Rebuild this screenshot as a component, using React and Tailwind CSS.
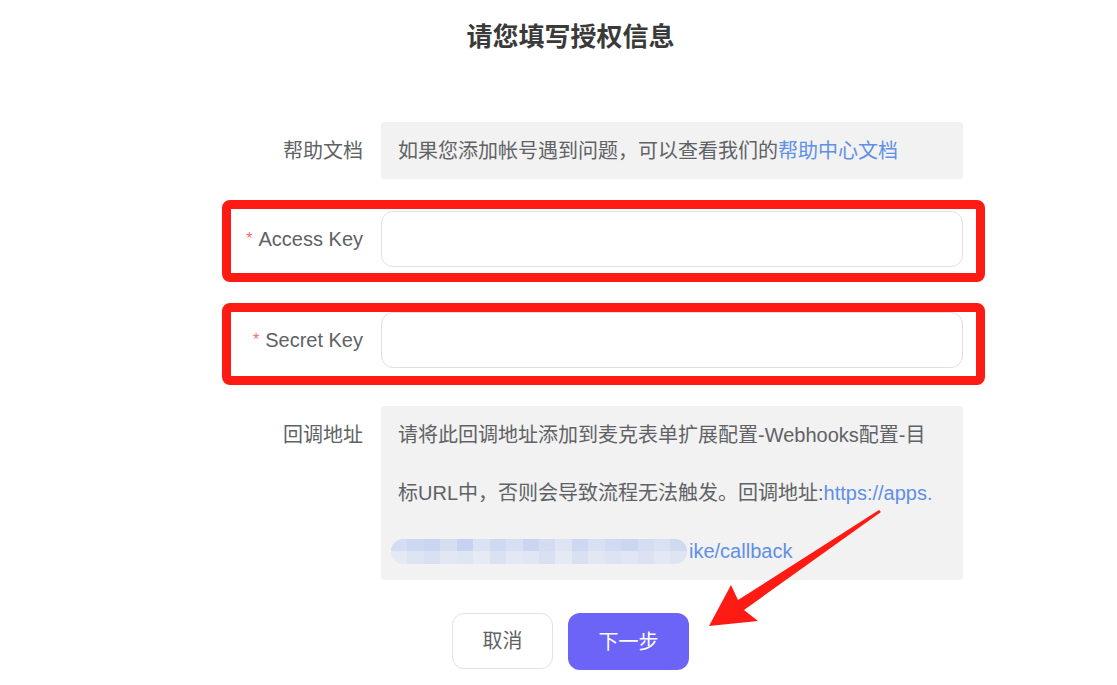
import React from "react";

const FONT = { fontFamily: '"Liberation Sans", "Noto Sans CJK SC", sans-serif' };

const blurCols = [
  ["#d3ddf3", "#e4e9f4"],
  ["#ccd8f2", "#dde4f3"],
  ["#c9d5f1", "#d8e0f2"],
  ["#d6def2", "#e2e7f3"],
  ["#c5d2f0", "#dfe5f3"],
  ["#dbe2f3", "#e6eaf4"],
  ["#cfd9f2", "#dae1f2"],
  ["#d7dff3", "#e3e8f4"],
  ["#cad6f1", "#e0e6f3"],
  ["#d4dcf2", "#d9e0f2"],
  ["#dee4f3", "#e5e9f4"],
  ["#cdd8f2", "#d8e0f2"],
  ["#d8e0f3", "#e2e7f3"],
  ["#d0daf2", "#dce3f3"],
  ["#cbd6f1", "#e1e6f4"],
  ["#d5ddf2", "#dbe2f3"],
  ["#dae1f3", "#e4e8f4"],
  ["#cfd9f2", "#dfe4f3"],
];

function Blur() {
  return (
    <span className="inline-flex -ml-[7px] mr-[2px] h-[25px] w-[296px] overflow-hidden rounded-[12px] align-middle blur-[0.6px]">
      {blurCols.map((c, i) => (
        <span key={i} className="flex h-full flex-1 flex-col">
          <span className="flex-1" style={{ background: c[0] }} />
          <span className="flex-1" style={{ background: c[1] }} />
        </span>
      ))}
    </span>
  );
}

function Label({ children, required }) {
  return (
    <div className="flex w-[132px] shrink-0 items-center justify-end text-[20px] text-[#606266]">
      {required && <span className="mr-[6px] text-[16px] text-[#f56c6c]">*</span>}
      {children}
    </div>
  );
}

export default function App() {
  return (
    <div className="relative h-[685px] w-[1117px] overflow-hidden bg-white" style={FONT}>
      <div className="flex h-[70px] items-center justify-center pl-[24px] pt-[4px] text-[26px] font-bold text-[#3a3a3a]">
        请您填写授权信息
      </div>

      <div className="ml-[222px] mt-[43px] flex w-[763px] flex-col">
        {/* Help row */}
        <div className="flex items-center gap-[18px] rounded-[8px] border-[9px] border-transparent pr-[13px]">
          <Label>帮助文档</Label>
          <div className="flex h-[57px] w-[582px] items-center rounded-[3px] bg-[#f2f2f2] pl-[17px] text-[20px] text-[#606266] whitespace-nowrap">
            如果您添加帐号遇到问题，可以查看我们的<span className="text-[#5f8fe6]">帮助中心文档</span>
          </div>
        </div>

        {/* Access Key */}
        <div className="mt-[12px] flex items-center gap-[18px] rounded-[8px] border-[9px] border-[#fd1b14] pt-[2px] pb-[6px] pr-[13px]">
          <Label required>Access Key</Label>
          <div className="h-[56px] w-[582px] rounded-[12px] border border-[#dcdfe6] bg-white" />
        </div>

        {/* Secret Key */}
        <div className="mt-[21px] flex items-center gap-[18px] rounded-[8px] border-[9px] border-[#fd1b14] pt-[0px] pb-[8px] pr-[13px]">
          <Label required>Secret Key</Label>
          <div className="h-[56px] w-[582px] rounded-[12px] border border-[#dcdfe6] bg-white" />
        </div>

        {/* Callback */}
        <div className="mt-[12px] flex items-start gap-[18px] rounded-[8px] border-[9px] border-transparent pr-[13px]">
          <div className="flex h-[58px] w-[132px] shrink-0 items-center justify-end text-[20px] text-[#606266]">
            回调地址
          </div>
          <div className="w-[582px] rounded-[3px] bg-[#f2f2f2] pl-[17px] text-[20px] leading-[58px] text-[#606266] whitespace-nowrap">
            <div>请将此回调地址添加到麦克表单扩展配置-Webhooks配置-目</div>
            <div>
              标URL中，否则会导致流程无法触发。回调地址:<span className="text-[#5f8fe6]">https://apps.</span>
            </div>
            <div className="flex items-center h-[58px]">
              <Blur />
              <span className="text-[#5f8fe6]">ike/callback</span>
            </div>
          </div>
        </div>
      </div>

      {/* Buttons */}
      <div className="ml-[452px] mt-[24px] flex gap-[15px]">
        <button className="flex h-[56px] w-[101px] items-center justify-center rounded-[12px] border border-[#e2e2e2] bg-white text-[20px] text-[#606266]">
          取消
        </button>
        <button className="flex h-[57px] w-[121px] items-center justify-center rounded-[12px] bg-[#6c64f7] text-[20px] text-white">
          下一步
        </button>
      </div>

      {/* Annotation arrow */}
      <svg className="pointer-events-none absolute left-0 top-0" width="1117" height="685" viewBox="0 0 1117 685">
        <polygon
          points="881,512 744,610 758,621 709,626 731,585 738,600 879,510"
          fill="#fd1b14"
        />
      </svg>
    </div>
  );
}
